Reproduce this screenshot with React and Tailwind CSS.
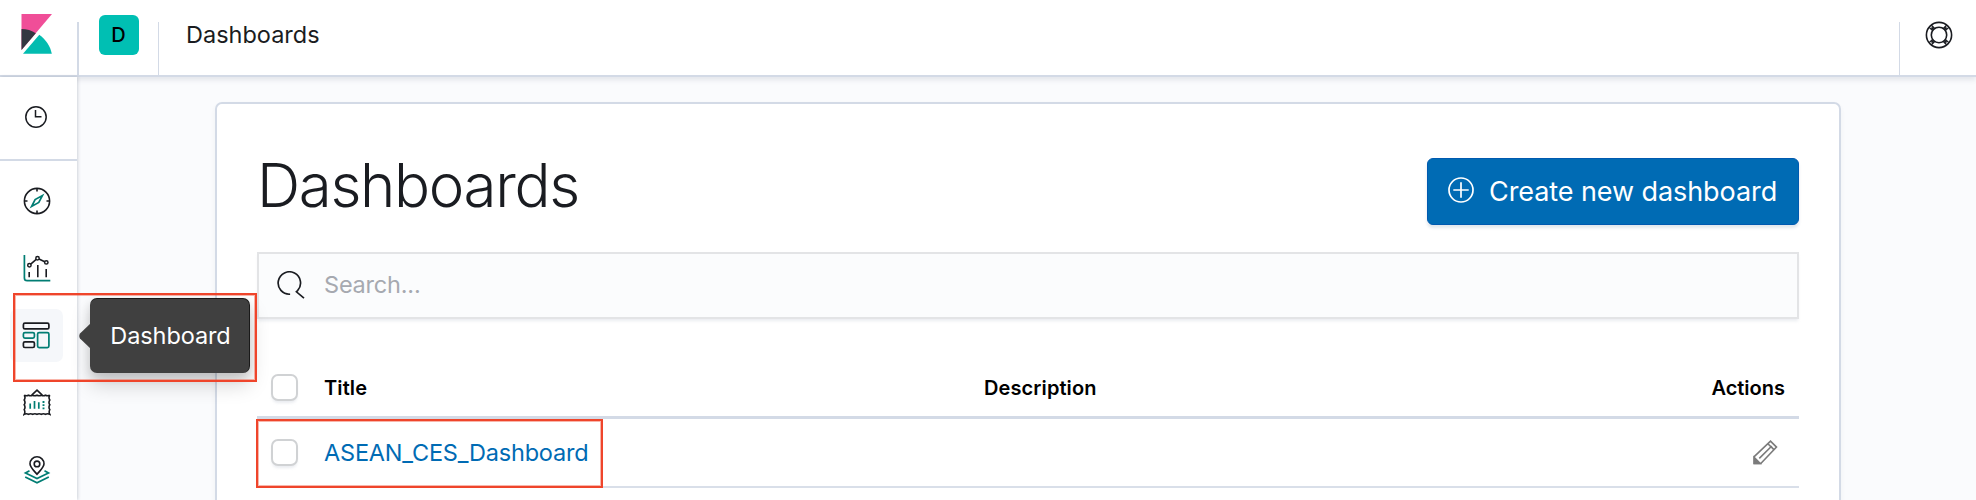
import React from "react";

const ink = "#1a1c21";
const teal = "#017d73";

function KibanaLogo() {
  return (
    <svg className="block" width="31" height="40" viewBox="0 0 31 40">
      <path fill="#f04e98" d="M0.500 0v36L31 0z" />
      <path fill="#343741" d="M0.500 15v21L14.800 19.200C10.700 16.600 5.800 15 0.500 15z" />
      <path fill="#02bcb0" d="M18.300 20.800L2 39.800h28.800c-1.500-7.800-6.300-14.500-12.500-19z" />
    </svg>
  );
}

function ClockIcon() {
  return (
    <svg className="block" width="22" height="22" viewBox="0 0 22 22" fill="none" stroke={ink} strokeWidth="1.500">
      <circle cx="11" cy="11" r="10.200" />
      <path d="M10.500 4v6.700h6" />
    </svg>
  );
}

function CompassIcon() {
  return (
    <svg className="block" width="28" height="28" viewBox="0 0 28 28" fill="none" stroke={ink} strokeWidth="1.600">
      <circle cx="14" cy="14" r="12.600" />
      <path d="M14 1.500v3M14 23.500v3M1.500 14h3M23.500 14h3" />
      <path stroke={teal} strokeWidth="1.700" d="M19.400 8.600l-3.600 6.900-7.200 4 3.500-6.900z" />
    </svg>
  );
}

function VisualizeIcon() {
  return (
    <svg className="block" width="28" height="28" viewBox="0 0 28 28" fill="none" stroke={ink} strokeWidth="1.600">
      <path stroke={teal} strokeWidth="1.700" d="M1.400 1v23q0 2.700 2.700 2.700H27.300" />
      <circle cx="6.400" cy="11.200" r="1.700" strokeWidth="1.500" />
      <circle cx="14.500" cy="4.300" r="1.700" strokeWidth="1.500" />
      <circle cx="23.300" cy="8.400" r="1.700" strokeWidth="1.500" />
      <path d="M7.700 10.100l5.500-4.700M16 5l5.700 2.700M6.200 18v5.300M14.800 11v12.300M23.200 15v8.300" />
    </svg>
  );
}

function DashboardIcon() {
  return (
    <svg className="block" width="28" height="28" viewBox="0 0 28 28" fill="none" stroke={ink} strokeWidth="1.700">
      <rect x="1.400" y="1.200" width="25.500" height="5.700" rx="1.500" />
      <rect x="1.400" y="10.600" width="11" height="5.500" rx="1.500" stroke={teal} />
      <rect x="1.400" y="19.800" width="11" height="5.700" rx="1.500" />
      <rect x="15.600" y="10.600" width="11.300" height="15" rx="1.500" stroke={teal} />
    </svg>
  );
}

function CanvasIcon() {
  return (
    <svg className="block" width="28" height="27" viewBox="0 0 28 27" fill="none" stroke={ink} strokeWidth="1.600">
      <path d="M8.700 6.200L14 1.200l5.300 5" />
      <path d="M1.200 6.200q2.100 1.200 4.300 0 2.100 1.200 4.200 0 2.100 1.200 4.300 0 2.100 1.200 4.300 0 2.100 1.200 4.200 0 2.100 1.200 4.300 0q-1.600 2.400 0 4.800-1.600 2.400 0 4.800-1.600 2.400 0 4.800-1.300 2.400 0 4.700-2.200-1.200-4.300 0-2.100-1.200-4.200 0-2.200-1.200-4.300 0-2.100-1.200-4.300 0-2.100-1.200-4.200 0-2.200-1.200-4.300 0 1.300-2.300 0-4.700 1.600-2.400 0-4.800 1.600-2.400 0-4.800 1.600-2.400 0-4.800z" />
      <path stroke={teal} strokeWidth="1.700" d="M7.200 14.500v5.200M11.500 12v7.700M15.800 13.200v6.500" />
      <path stroke={teal} strokeWidth="1.900" strokeDasharray="1.900 1.300" d="M20.500 12v8.200" />
    </svg>
  );
}

function MapsIcon() {
  return (
    <svg className="block" width="28" height="28" viewBox="0 0 28 28" fill="none" stroke={ink} strokeWidth="1.600">
      <path d="M14 18.300c-3-3.700-7-6.900-7-10.500a7 7 0 0 1 14 0c0 3.600-4 6.800-7 10.500z" />
      <circle cx="14" cy="7.900" r="2.800" />
      <path stroke={teal} strokeWidth="1.700" d="M6.500 14.800l-4 2.100L14 22.600l11.500-5.700-4-2.100M2.200 20.900L14 26.700l11.800-5.800" />
    </svg>
  );
}

function HelpIcon() {
  return (
    <svg className="block" width="28" height="28" viewBox="0 0 28 28" fill="none" stroke={ink} strokeWidth="1.600">
      <circle cx="14" cy="14" r="12.600" />
      <circle cx="14" cy="14" r="7.700" />
      <path strokeWidth="1.300" d="M4.200 6.400l3.600 3.500M6.400 4.200l3.500 3.600M23.800 6.400l-3.600 3.500M21.600 4.200l-3.500 3.600M4.200 21.600l3.600-3.500M6.400 23.800l3.500-3.600M23.800 21.600l-3.600-3.500M21.600 23.800l-3.500-3.600" />
      <path strokeWidth="2" d="M6.500 6.500l2.100 2.100M21.500 6.500l-2.100 2.100M6.500 21.500l2.100-2.100M21.500 21.500l-2.100-2.100" />
    </svg>
  );
}

function PlusCircleIcon() {
  return (
    <svg className="mb-[3px] block" width="26" height="26" viewBox="0 0 26 26" fill="none" stroke="#fff" strokeWidth="1.700">
      <circle cx="13" cy="13" r="12" />
      <path d="M13 5.300v15.400M5.300 13h15.400" />
    </svg>
  );
}

function SearchIcon() {
  return (
    <svg className="block" width="28" height="28" viewBox="0 0 28 28" fill="none" stroke={ink} strokeWidth="1.700">
      <path d="M13.100 23.200A11.200 11.200 0 1 1 20.600 19.600L19.400 20.800L27 27.200" />
    </svg>
  );
}

function PencilIcon() {
  return (
    <svg className="block" width="25" height="25" viewBox="0 0 25 25" fill="none" stroke="#7b7b7b" strokeWidth="1.600">
      <path d="M1.200 16.700L17.500 1.100l6 6L7.800 23.500H1.200zM6.300 18.400L18.800 6M14.900 3.700l2.900 2.900M18 6.600l2.900 3" />
      <path fill="#7b7b7b" d="M1.200 17.500v6h6z" />
    </svg>
  );
}

function NavItem({ active, children }) {
  return (
    <div className={"flex h-[53px] w-[53px] items-center justify-center rounded-[7px] " + (active ? "bg-[#f5f7fa]" : "")}>
      {children}
    </div>
  );
}

function Checkbox() {
  return <div className="h-[27px] w-[27px] shrink-0 rounded-[7px] border-2 border-[#d0d2d4] bg-white shadow-[0_3px_3px_-1px_rgba(152,162,179,0.2)]" />;
}

export default function App() {
  return (
    <div className="relative flex h-[500px] w-[1976px] flex-col overflow-hidden bg-[#fafbfd] font-['Inter','Liberation_Sans',sans-serif] text-[#1a1c21]">
      <header className="relative z-10 flex h-[77px] shrink-0 items-start border-b-2 border-[#d3dae6] bg-white shadow-[0_3px_5px_rgba(65,78,101,0.12)]">
        <div className="flex w-[77px] pt-[14px] pl-[21px]">
          <KibanaLogo />
        </div>
        <div className="mt-[22px] h-[53px] w-[1.500px] bg-[#d3dae6]" />
        <div className="mt-[15px] ml-5 flex h-10 w-10 items-center justify-center rounded-[6px] bg-[#00bfb3] text-[20px] font-medium text-black">
          D
        </div>
        <div className="mt-[22px] ml-[19px] h-[53px] w-[1.500px] bg-[#d3dae6]" />
        <div className="mt-[19px] ml-[27px] text-[23.500px] leading-8">Dashboards</div>
        <div className="mt-[22px] ml-auto h-[53px] w-[1.500px] bg-[#d3dae6]" />
        <div className="flex w-[76px] pt-[21px] pl-[25px]">
          <HelpIcon />
        </div>
      </header>

      <div className="flex min-h-0 flex-1">
        <nav className="relative z-20 flex w-[77px] shrink-0 flex-col bg-white shadow-[1px_0_3px_rgba(65,78,101,0.22)]">
          <div className="flex h-[84px] items-center border-b-2 border-[#d3dae6] pl-[25px] pb-[3px]">
            <ClockIcon />
          </div>
          <div className="flex flex-col gap-[14px] pt-[14px] pl-[10px]">
            <NavItem><div className="pb-0.5"><CompassIcon /></div></NavItem>
            <NavItem><div className="pb-0.5"><VisualizeIcon /></div></NavItem>
            <NavItem active><div className="pr-px"><DashboardIcon /></div></NavItem>
            <NavItem><CanvasIcon /></NavItem>
            <NavItem><MapsIcon /></NavItem>
          </div>
        </nav>

        <main className="flex-1 pt-[25px] pr-[135px] pl-[138px]">
          <section className="h-[460px] rounded-[7px] border-2 border-[#d3dae6] bg-white px-10 shadow-[0_3px_5px_rgba(65,78,101,0.06)]">
            <div className="flex h-[121px] items-start justify-between pt-[54px]">
              <h1 className="text-[60px] leading-[54px] font-[330] tracking-[-1.350px]">Dashboards</h1>
              <button className="flex h-[67px] w-[372px] items-center rounded-[6px] border border-[#005ab0] bg-[#006bb4] pl-5 text-[27px] tracking-[-0.080px] text-white shadow-[0_3px_3px_rgba(54,97,126,0.15)]">
                <PlusCircleIcon />
                <span className="ml-[15px] pt-px">Create new dashboard</span>
              </button>
            </div>

            <div className="mt-[27px] flex h-[67px] items-center border-2 border-[#e3e4e6] bg-[#fbfcfd] pb-0.5 pl-[18px] shadow-[0_3px_3px_-1px_rgba(152,162,179,0.2)]">
              <SearchIcon />
              <span className="ml-[19px] text-[23.500px] tracking-[-0.200px] text-[#a6a9b0]">Search...</span>
            </div>

            <div className="mt-[39px]">
              <div className="flex h-[61px] items-center border-b-[3px] border-[#d3dae6] pr-[14px] pl-[14px] text-[20px] font-semibold text-black">
                <Checkbox />
                <span className="ml-[26px] w-[660px] pt-0.5 tracking-[0.100px]">Title</span>
                <span className="pt-0.5 tracking-[0.100px]">Description</span>
                <span className="ml-auto pt-0.5">Actions</span>
              </div>
              <div className="flex h-[69px] items-center border-b-2 border-[#d9dfe9] pr-[21px] pl-[14px]">
                <Checkbox />
                <a className="ml-[26px] text-[23.500px] tracking-[-0.200px] text-[#006bb4]">ASEAN_CES_Dashboard</a>
                <span className="ml-auto"><PencilIcon /></span>
              </div>
            </div>
          </section>
        </main>
      </div>

      <div className="absolute top-[298px] left-[90px] z-30 flex h-[75px] w-[160px] items-center justify-center rounded-[7px] border-t border-r border-black/60 bg-[#404040] pb-px pl-[2px] text-[23.500px] tracking-[-0.100px] text-white shadow-[0_12px_20px_rgba(0,0,0,0.17),0_4px_10px_rgba(0,0,0,0.12)]">
        <svg className="absolute top-[24px] left-[-11px]" width="12" height="26" viewBox="0 0 12 26">
          <path fill="#404040" d="M12 0L1 10.500q-1.500 2.500 0 5L12 26z" />
        </svg>
        Dashboard
      </div>
      <div className="absolute top-[293px] left-[13px] z-40 h-[89px] w-[244px] border-2 border-[#ef452b] shadow-[inset_0_0_0_1px_rgba(239,69,43,0.4)]" />
      <div className="absolute top-[419px] left-[256px] z-40 h-[69px] w-[347px] border-2 border-[#ef452b] shadow-[inset_0_0_0_1px_rgba(239,69,43,0.4)]" />
    </div>
  );
}
